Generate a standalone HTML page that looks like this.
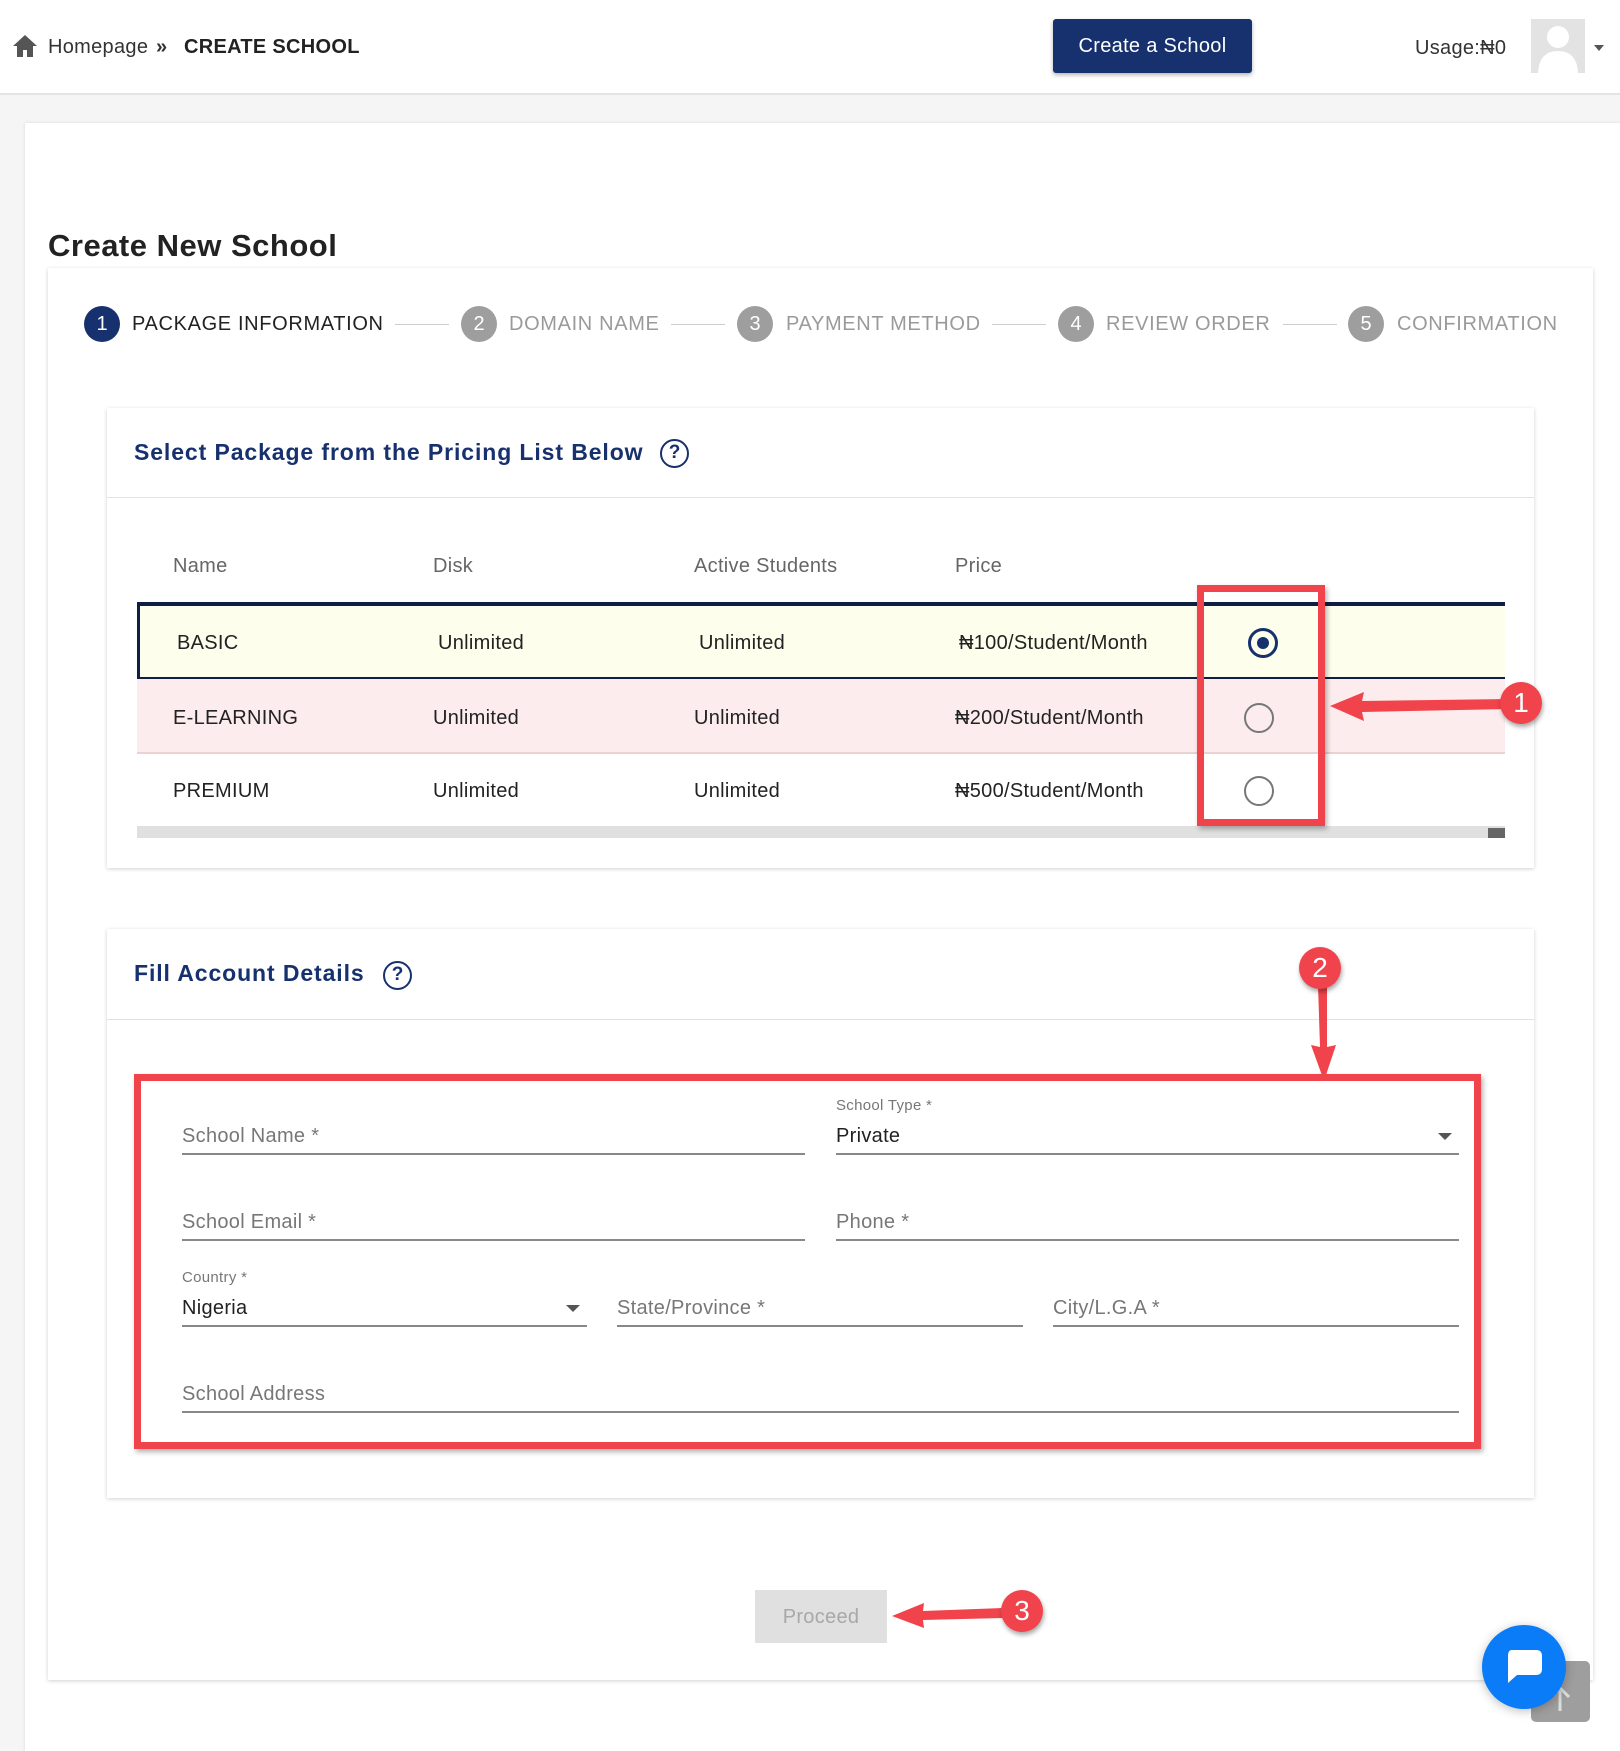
<!DOCTYPE html>
<html><head><meta charset="utf-8"><style>
*{box-sizing:border-box;margin:0;padding:0}
body{width:1620px;height:1751px;position:relative;overflow:hidden;background:#f5f5f5;font-family:"Liberation Sans",Arial,sans-serif;color:#222;letter-spacing:0.3px}
.a{position:absolute}
.hdr{left:0;top:0;width:1620px;height:95px;background:#fff;border-bottom:2px solid #e4e4e4}
.t{position:absolute;white-space:nowrap}
.card{background:#fff;box-shadow:0 1px 4px rgba(0,0,0,.18)}
.step{font-size:20px;color:#9a9a9a;letter-spacing:0.65px;top:313px!important}
.sc{position:absolute;width:36px;height:36px;border-radius:50%;background:#9e9e9e;color:#fff;font-size:20px;text-align:center;line-height:36px;letter-spacing:0}
.ln{position:absolute;height:1px;background:#cfcfcf;top:324px}
.th{font-size:20px;color:#666}
.td{font-size:20px;color:#222}
.rad{position:absolute;width:30px;height:30px;border-radius:50%;border:2.5px solid #777}
.lab{font-size:20px;color:#777}
.ul{position:absolute;height:1.5px;background:#888}
.sm{font-size:15px;color:#777}
.red{position:absolute;border:7px solid #f0434b;box-shadow:2px 3px 5px rgba(0,0,0,.3)}
.num{position:absolute;width:42px;height:42px;border-radius:50%;background:#f0434b;color:#fff;font-size:28px;text-align:center;line-height:42px;box-shadow:1px 3px 5px rgba(0,0,0,.35);letter-spacing:0}
.caret{position:absolute;width:0;height:0;border-left:7px solid transparent;border-right:7px solid transparent;border-top:7px solid #555}
</style></head><body>
<div class="a hdr">
 <svg class="a" style="left:12px;top:34px" width="26" height="24" viewBox="0 0 26 24"><path d="M13 1 L1 12 H5 V23 H11 V16 H15 V23 H21 V12 H25 Z" fill="#555"/></svg>
 <div class="t" style="left:48px;top:36px;font-size:20px;color:#333">Homepage</div>
 <div class="t" style="left:156px;top:36px;font-size:20px;color:#333;font-weight:bold">»</div>
 <div class="t" style="left:184px;top:36px;font-size:20px;font-weight:bold;color:#222">CREATE SCHOOL</div>
 <div class="a" style="left:1053px;top:19px;width:199px;height:54px;background:#17316e;border-radius:3px;box-shadow:0 2px 4px rgba(0,0,0,.3);color:#fff;font-size:20px;text-align:center;line-height:54px">Create a School</div>
 <div class="t" style="left:1415px;top:37px;font-size:20px;color:#333">Usage:₦0</div>
 <div class="a" style="left:1531px;top:19px;width:54px;height:54px;background:#e3e3e3;overflow:hidden"><svg width="54" height="54" viewBox="0 0 54 54"><circle cx="27" cy="18" r="11" fill="#fff"/><path d="M7 54 Q8 32 27 32 Q46 32 47 54Z" fill="#fff"/></svg></div>
 <div class="caret" style="left:1594px;top:45px;border-width:6px 5px 0 5px"></div>
</div>
<div class="a" style="left:25px;top:123px;width:1595px;height:1628px;background:#fff;box-shadow:0 0 3px rgba(0,0,0,.12)"></div>
<div class="t" style="left:48px;top:228px;font-size:31px;font-weight:bold;color:#222;letter-spacing:0.5px">Create New School</div>
<div class="a card" style="left:48px;top:268px;width:1545px;height:1412px"></div>
<div class="sc" style="left:84px;top:306px;background:#17316e">1</div>
<div class="t step" style="left:132px;color:#222">PACKAGE INFORMATION</div>
<div class="ln" style="left:395px;width:54px"></div>
<div class="sc" style="left:461px;top:306px">2</div>
<div class="t step" style="left:509px">DOMAIN NAME</div>
<div class="ln" style="left:671px;width:54px"></div>
<div class="sc" style="left:737px;top:306px">3</div>
<div class="t step" style="left:786px">PAYMENT METHOD</div>
<div class="ln" style="left:992px;width:54px"></div>
<div class="sc" style="left:1058px;top:306px">4</div>
<div class="t step" style="left:1106px">REVIEW ORDER</div>
<div class="ln" style="left:1283px;width:54px"></div>
<div class="sc" style="left:1348px;top:306px">5</div>
<div class="t step" style="left:1397px">CONFIRMATION</div>
<div class="a card" style="left:107px;top:408px;width:1427px;height:460px"></div>
<div class="t" style="left:134px;top:439px;font-size:23px;font-weight:bold;color:#17316e;letter-spacing:0.9px">Select Package from the Pricing List Below</div>
<div class="a" style="left:660px;top:439px;width:29px;height:29px;border:2.5px solid #17316e;border-radius:50%;color:#17316e;font-size:19px;font-weight:bold;text-align:center;line-height:24px;letter-spacing:0">?</div>
<div class="a" style="left:107px;top:497px;width:1427px;height:1px;background:#e2e2e2"></div>
<div class="t th" style="left:173px;top:555px">Name</div>
<div class="t th" style="left:433px;top:555px">Disk</div>
<div class="t th" style="left:694px;top:555px">Active Students</div>
<div class="t th" style="left:955px;top:555px">Price</div>
<div class="a" style="left:137px;top:602px;width:1368px;height:77px;background:#fefeed;border-top:4px solid #0f1e45;border-left:3px solid #0f1e45;border-bottom:2px solid #0f1e45"></div>
<div class="a" style="left:137px;top:679px;width:1368px;height:75px;background:#fdeced;border-bottom:2px solid #e8d2d2"></div>
<div class="t td" style="left:177px;top:632px">BASIC</div>
<div class="t td" style="left:438px;top:632px">Unlimited</div>
<div class="t td" style="left:699px;top:632px">Unlimited</div>
<div class="t td" style="left:959px;top:632px">₦100/Student/Month</div>
<div class="t td" style="left:173px;top:707px">E-LEARNING</div>
<div class="t td" style="left:433px;top:707px">Unlimited</div>
<div class="t td" style="left:694px;top:707px">Unlimited</div>
<div class="t td" style="left:955px;top:707px">₦200/Student/Month</div>
<div class="t td" style="left:173px;top:780px">PREMIUM</div>
<div class="t td" style="left:433px;top:780px">Unlimited</div>
<div class="t td" style="left:694px;top:780px">Unlimited</div>
<div class="t td" style="left:955px;top:780px">₦500/Student/Month</div>
<div class="rad" style="left:1248px;top:628px;border-color:#17316e;border-width:3px"><div class="a" style="left:6px;top:6px;width:12px;height:12px;border-radius:50%;background:#17316e"></div></div>
<div class="rad" style="left:1244px;top:703px"></div>
<div class="rad" style="left:1244px;top:776px"></div>
<div class="a" style="left:137px;top:826px;width:1368px;height:12px;background:#e0e0e0"></div>
<div class="a" style="left:1488px;top:828px;width:17px;height:10px;background:#666"></div>
<div class="red" style="left:1197px;top:585px;width:128px;height:241px"></div>
<svg class="a" style="left:1320px;top:680px" width="230" height="50"><path d="M10 26 L44 12 L42 21 L190 19 L190 29 L42 32 L44 41 Z" fill="#f0434b"/></svg>
<div class="num" style="left:1500px;top:682px">1</div>
<div class="a card" style="left:107px;top:929px;width:1427px;height:569px"></div>
<div class="t" style="left:134px;top:960px;font-size:23px;font-weight:bold;color:#17316e;letter-spacing:0.9px">Fill Account Details</div>
<div class="a" style="left:383px;top:961px;width:29px;height:29px;border:2.5px solid #17316e;border-radius:50%;color:#17316e;font-size:19px;font-weight:bold;text-align:center;line-height:24px;letter-spacing:0">?</div>
<div class="a" style="left:107px;top:1019px;width:1427px;height:1px;background:#e2e2e2"></div>
<div class="t lab" style="left:182px;top:1125px">School Name *</div>
<div class="ul" style="left:182px;top:1153px;width:623px"></div>
<div class="t sm" style="left:836px;top:1097px">School Type *</div>
<div class="t lab" style="left:836px;top:1125px;color:#222">Private</div>
<div class="caret" style="left:1438px;top:1133px"></div>
<div class="ul" style="left:836px;top:1153px;width:623px"></div>
<div class="t lab" style="left:182px;top:1211px">School Email *</div>
<div class="ul" style="left:182px;top:1239px;width:623px"></div>
<div class="t lab" style="left:836px;top:1211px">Phone *</div>
<div class="ul" style="left:836px;top:1239px;width:623px"></div>
<div class="t sm" style="left:182px;top:1269px">Country *</div>
<div class="t lab" style="left:182px;top:1297px;color:#222">Nigeria</div>
<div class="caret" style="left:566px;top:1305px"></div>
<div class="ul" style="left:182px;top:1325px;width:405px"></div>
<div class="t lab" style="left:617px;top:1297px">State/Province *</div>
<div class="ul" style="left:617px;top:1325px;width:406px"></div>
<div class="t lab" style="left:1053px;top:1297px">City/L.G.A *</div>
<div class="ul" style="left:1053px;top:1325px;width:406px"></div>
<div class="t lab" style="left:182px;top:1383px">School Address</div>
<div class="ul" style="left:182px;top:1411px;width:1277px"></div>
<div class="red" style="left:134px;top:1074px;width:1347px;height:375px"></div>
<svg class="a" style="left:1305px;top:985px" width="40" height="100"><path d="M13 0 L22 0 L22 62 L31 60 L19 96 L6 60 L15 62 Z" fill="#f0434b"/></svg>
<div class="num" style="left:1299px;top:947px">2</div>
<div class="a" style="left:755px;top:1590px;width:132px;height:53px;background:#e0e0e0;color:#a8a8a8;font-size:20px;text-align:center;line-height:55px">Proceed</div>
<svg class="a" style="left:888px;top:1592px" width="130" height="44"><path d="M4 24 L36 11 L35 19 L115 16 L115 26 L35 28 L36 36 Z" fill="#f0434b"/></svg>
<div class="num" style="left:1001px;top:1590px">3</div>
<div class="a" style="left:1531px;top:1661px;width:59px;height:61px;background:#9e9e9e;border-radius:5px"><svg width="59" height="61"><path d="M29 50 V30 M20 36 L29 27 L38 36" stroke="#ddd" stroke-width="3" fill="none"/></svg></div>
<div class="a" style="left:1482px;top:1625px;width:84px;height:84px;border-radius:50%;background:#0a7cf8;box-shadow:0 2px 10px rgba(0,0,0,.25)"><svg width="84" height="84"><path d="M30 25 H54 Q60 25 60 31 V44 Q60 50 54 50 H35 L26 58 L26 31 Q26 25 30 25Z" fill="#fff"/></svg></div>
</body></html>
